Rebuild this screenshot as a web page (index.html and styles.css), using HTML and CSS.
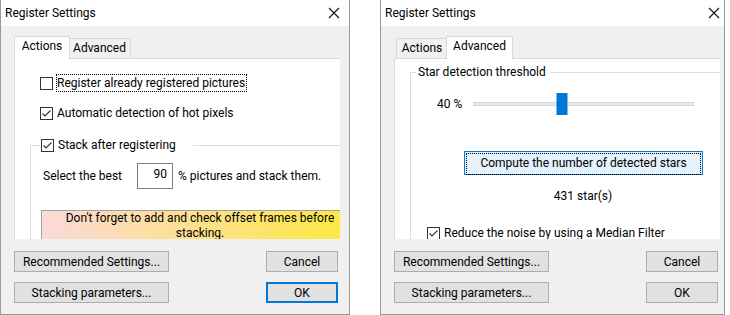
FILE: index.html
```html
<html>

<head>
    <meta http-equiv="Content-Type" content="text/html" charset="utf-8">
    <title>Register Settings</title>
    <link rel="stylesheet" href="styles.css">
</head>

<body>
    <div class="screen">
        <!-- first dialog: Actions tab -->
        <div class="dialog">
            <div class="titlebar">
                <span class="title">Register Settings</span>
                <svg class="close" width="12" height="12" viewBox="0 0 12 12">
                    <path d="M1 1 L11 11 M11 1 L1 11" stroke="#111" stroke-width="1.1" fill="none" />
                </svg>
            </div>
            <div class="body">
                <div class="tabs">
                    <div class="tab tab-actions active">Actions</div>
                    <div class="tab tab-advanced">Advanced</div>
                </div>
                <div class="page">
                    <div class="check first">
                        <span class="box"></span>
                        <span class="label focus">Register already registered pictures</span>
                    </div>
                    <div class="check second">
                        <span class="box checked">
                            <svg width="11" height="11" viewBox="0 0 11 11"><path d="M1.5 5.5 L4 8 L9.5 2.5" stroke="#333" stroke-width="1.1" fill="none" /></svg>
                        </span>
                        <span class="label">Automatic detection of hot pixels</span>
                    </div>
                    <fieldset class="group stack-group">
                        <legend class="stack-legend">
                            <div class="check">
                                <span class="box checked">
                                    <svg width="11" height="11" viewBox="0 0 11 11"><path d="M1.5 5.5 L4 8 L9.5 2.5" stroke="#333" stroke-width="1.1" fill="none" /></svg>
                                </span>
                                <span class="label">Stack after registering</span>
                            </div>
                        </legend>
                        <div class="best-row">
                            <span class="best-label">Select the best</span>
                            <span class="num-input">90</span>
                            <span class="best-after">% pictures and stack them.</span>
                        </div>
                        <div class="warning">Don't forget to add and check offset frames before stacking.</div>
                    </fieldset>
                </div>
                <div class="buttons">
                    <button class="btn">Recommended Settings...</button>
                    <button class="btn">Cancel</button>
                    <button class="btn">Stacking parameters...</button>
                    <button class="btn default">OK</button>
                </div>
            </div>
        </div>

        <!-- second dialog: Advanced tab -->
        <div class="dialog narrow">
            <div class="titlebar">
                <span class="title">Register Settings</span>
                <svg class="close" width="12" height="12" viewBox="0 0 12 12">
                    <path d="M1 1 L11 11 M11 1 L1 11" stroke="#111" stroke-width="1.1" fill="none" />
                </svg>
            </div>
            <div class="body">
                <div class="tabs">
                    <div class="tab tab-actions">Actions</div>
                    <div class="tab tab-advanced active">Advanced</div>
                </div>
                <div class="page">
                    <fieldset class="group star-group">
                        <legend class="star-legend">Star detection threshold</legend>
                        <div class="slider-row">
                            <span class="slider-label">40 %</span>
                            <div class="track">
                                <div class="thumb" style="left: 40%"></div>
                            </div>
                        </div>
                        <button class="btn compute"><span class="compute-focus">Compute the number of detected stars</span></button>
                        <div class="star-count">431 star(s)</div>
                        <div class="check median">
                            <span class="box checked">
                                <svg width="11" height="11" viewBox="0 0 11 11"><path d="M1.5 5.5 L4 8 L9.5 2.5" stroke="#333" stroke-width="1.1" fill="none" /></svg>
                            </span>
                            <span class="label">Reduce the noise by using a Median Filter</span>
                        </div>
                    </fieldset>
                </div>
                <div class="buttons">
                    <button class="btn">Recommended Settings...</button>
                    <button class="btn">Cancel</button>
                    <button class="btn">Stacking parameters...</button>
                    <button class="btn">OK</button>
                </div>
            </div>
        </div>
    </div>
</body>

</html>
```

FILE: styles.css
```css
body {
    margin: 0;
    background-color: #fff;
    font-family: Roboto, 'Noto Sans', sans-serif;
    font-size: 12px;
    color: #000;
}

.screen {
    display: flex;
    gap: 30px;
}

.dialog {
    box-sizing: border-box;
    width: 350px;
    height: 315px;
    border: 1px solid #999;
    border-top: none;
    background-color: #f0f0f0;
    overflow: hidden;
}

.dialog.narrow {
    width: 345px;
}

.titlebar {
    display: flex;
    align-items: center;
    height: 26px;
    background-color: #fff;
    padding-left: 4px;
}

.title {
    flex: 1;
    line-height: 16px;
}

.close {
    margin-right: 9px;
}

.narrow .close {
    margin-right: 4px;
}

.body {
    padding: 10px 0 0 13px;
}

/* tab strip */
.tabs {
    display: flex;
    align-items: flex-end;
    height: 22px;
    padding-left: 2px;
}

.tab {
    box-sizing: border-box;
    height: 20px;
    border: 1px solid #d9d9d9;
    border-bottom: none;
    background-color: #f0f0f0;
    text-align: center;
    line-height: 19px;
}

.tab-actions {
    width: 52px;
}

.tab-advanced {
    width: 63px;
}

.tab.active {
    position: relative;
    z-index: 1;
    height: 23px;
    margin: 0 -2px -1px -2px;
    padding: 0 2px;
    background-color: #fff;
    line-height: 19px;
    width: auto;
}

.tab-actions.active {
    width: 56px;
}

.tab-advanced.active {
    width: 67px;
}

.page {
    box-sizing: border-box;
    width: 326px;
    height: 181px;
    border-top: 1px solid #d9d9d9;
    border-left: 1px solid #d9d9d9;
    background-color: #fff;
    overflow: hidden;
}

/* checkboxes */
.check {
    display: flex;
    align-items: center;
    height: 18px;
    gap: 3px;
}

.check.first {
    margin: 15px 0 0 25px;
}

.check.second {
    margin: 12px 0 0 25px;
}

.box {
    box-sizing: border-box;
    display: flex;
    align-items: center;
    justify-content: center;
    width: 13px;
    height: 13px;
    border: 1px solid #333;
    background-color: #fff;
}

.label {
    border: 1px dotted transparent;
    padding: 0 1px 0 0;
    line-height: 16px;
    white-space: nowrap;
}

.label.focus {
    border-color: #000;
}

/* group boxes */
.group {
    box-sizing: border-box;
    width: 380px;
    height: 300px;
    padding: 0;
    border: 1px solid #dcdcdc;
    min-inline-size: 0;
}

.stack-group {
    margin: 14px 0 0 15px;
}

.stack-legend {
    margin-left: 9px;
    padding: 0 15px 0 1px;
}

.best-row {
    display: flex;
    align-items: center;
    height: 26px;
    margin: 9px 0 0 12px;
}

.best-label {
    width: 94px;
    line-height: 16px;
}

.num-input {
    box-sizing: border-box;
    width: 36px;
    height: 26px;
    border: 1px solid #7a7a7a;
    background-color: #fff;
    text-align: right;
    padding-right: 5px;
    line-height: 20px;
}

.best-after {
    margin-left: 5px;
    line-height: 16px;
}

.warning {
    box-sizing: border-box;
    width: 318px;
    margin: 21px 0 0 10px;
    padding-top: 0;
    border: 1px solid #a0a0a0;
    background: linear-gradient(to right, #fbd9d9, #fde93c);
    text-align: center;
    line-height: 15px;
}

/* advanced page */
.star-group {
    margin: 5px 0 0 15px;
}

.star-legend {
    margin-left: 5px;
    padding: 0 4px 0 2px;
    line-height: 16px;
}

.slider-row {
    display: flex;
    align-items: center;
    height: 22px;
    margin: 13px 0 0 26px;
}

.slider-label {
    width: 36px;
    line-height: 16px;
}

.track {
    position: relative;
    box-sizing: border-box;
    width: 221px;
    height: 4px;
    border: 1px solid #d6d6d6;
    background-color: #e7eaea;
}

.thumb {
    position: absolute;
    top: 50%;
    width: 11px;
    height: 22px;
    background-color: #0078d7;
    transform: translate(-50%, -50%);
}

.btn {
    box-sizing: border-box;
    height: 21px;
    border: 1px solid #adadad;
    background-color: #e1e1e1;
    font-family: inherit;
    font-size: 12px;
    line-height: 16px;
    color: #000;
    padding: 0;
}

.btn.default {
    border: 2px solid #0078d7;
}

.compute {
    display: block;
    width: 239px;
    height: 24px;
    margin: 36px 0 0 53px;
    padding: 1px;
    border-color: #0078d7;
    background-color: #e5f1fb;
}

.compute-focus {
    display: block;
    height: 20px;
    line-height: 19px;
    border: 1px dotted #000;
}

.star-count {
    width: 344px;
    margin-top: 13px;
    text-align: center;
    line-height: 16px;
}

.check.median {
    margin: 20px 0 0 16px;
}

/* bottom buttons */
.buttons {
    display: grid;
    grid-template-columns: 155px 72px;
    column-gap: 97px;
    row-gap: 10px;
    margin-top: 12px;
}
```
